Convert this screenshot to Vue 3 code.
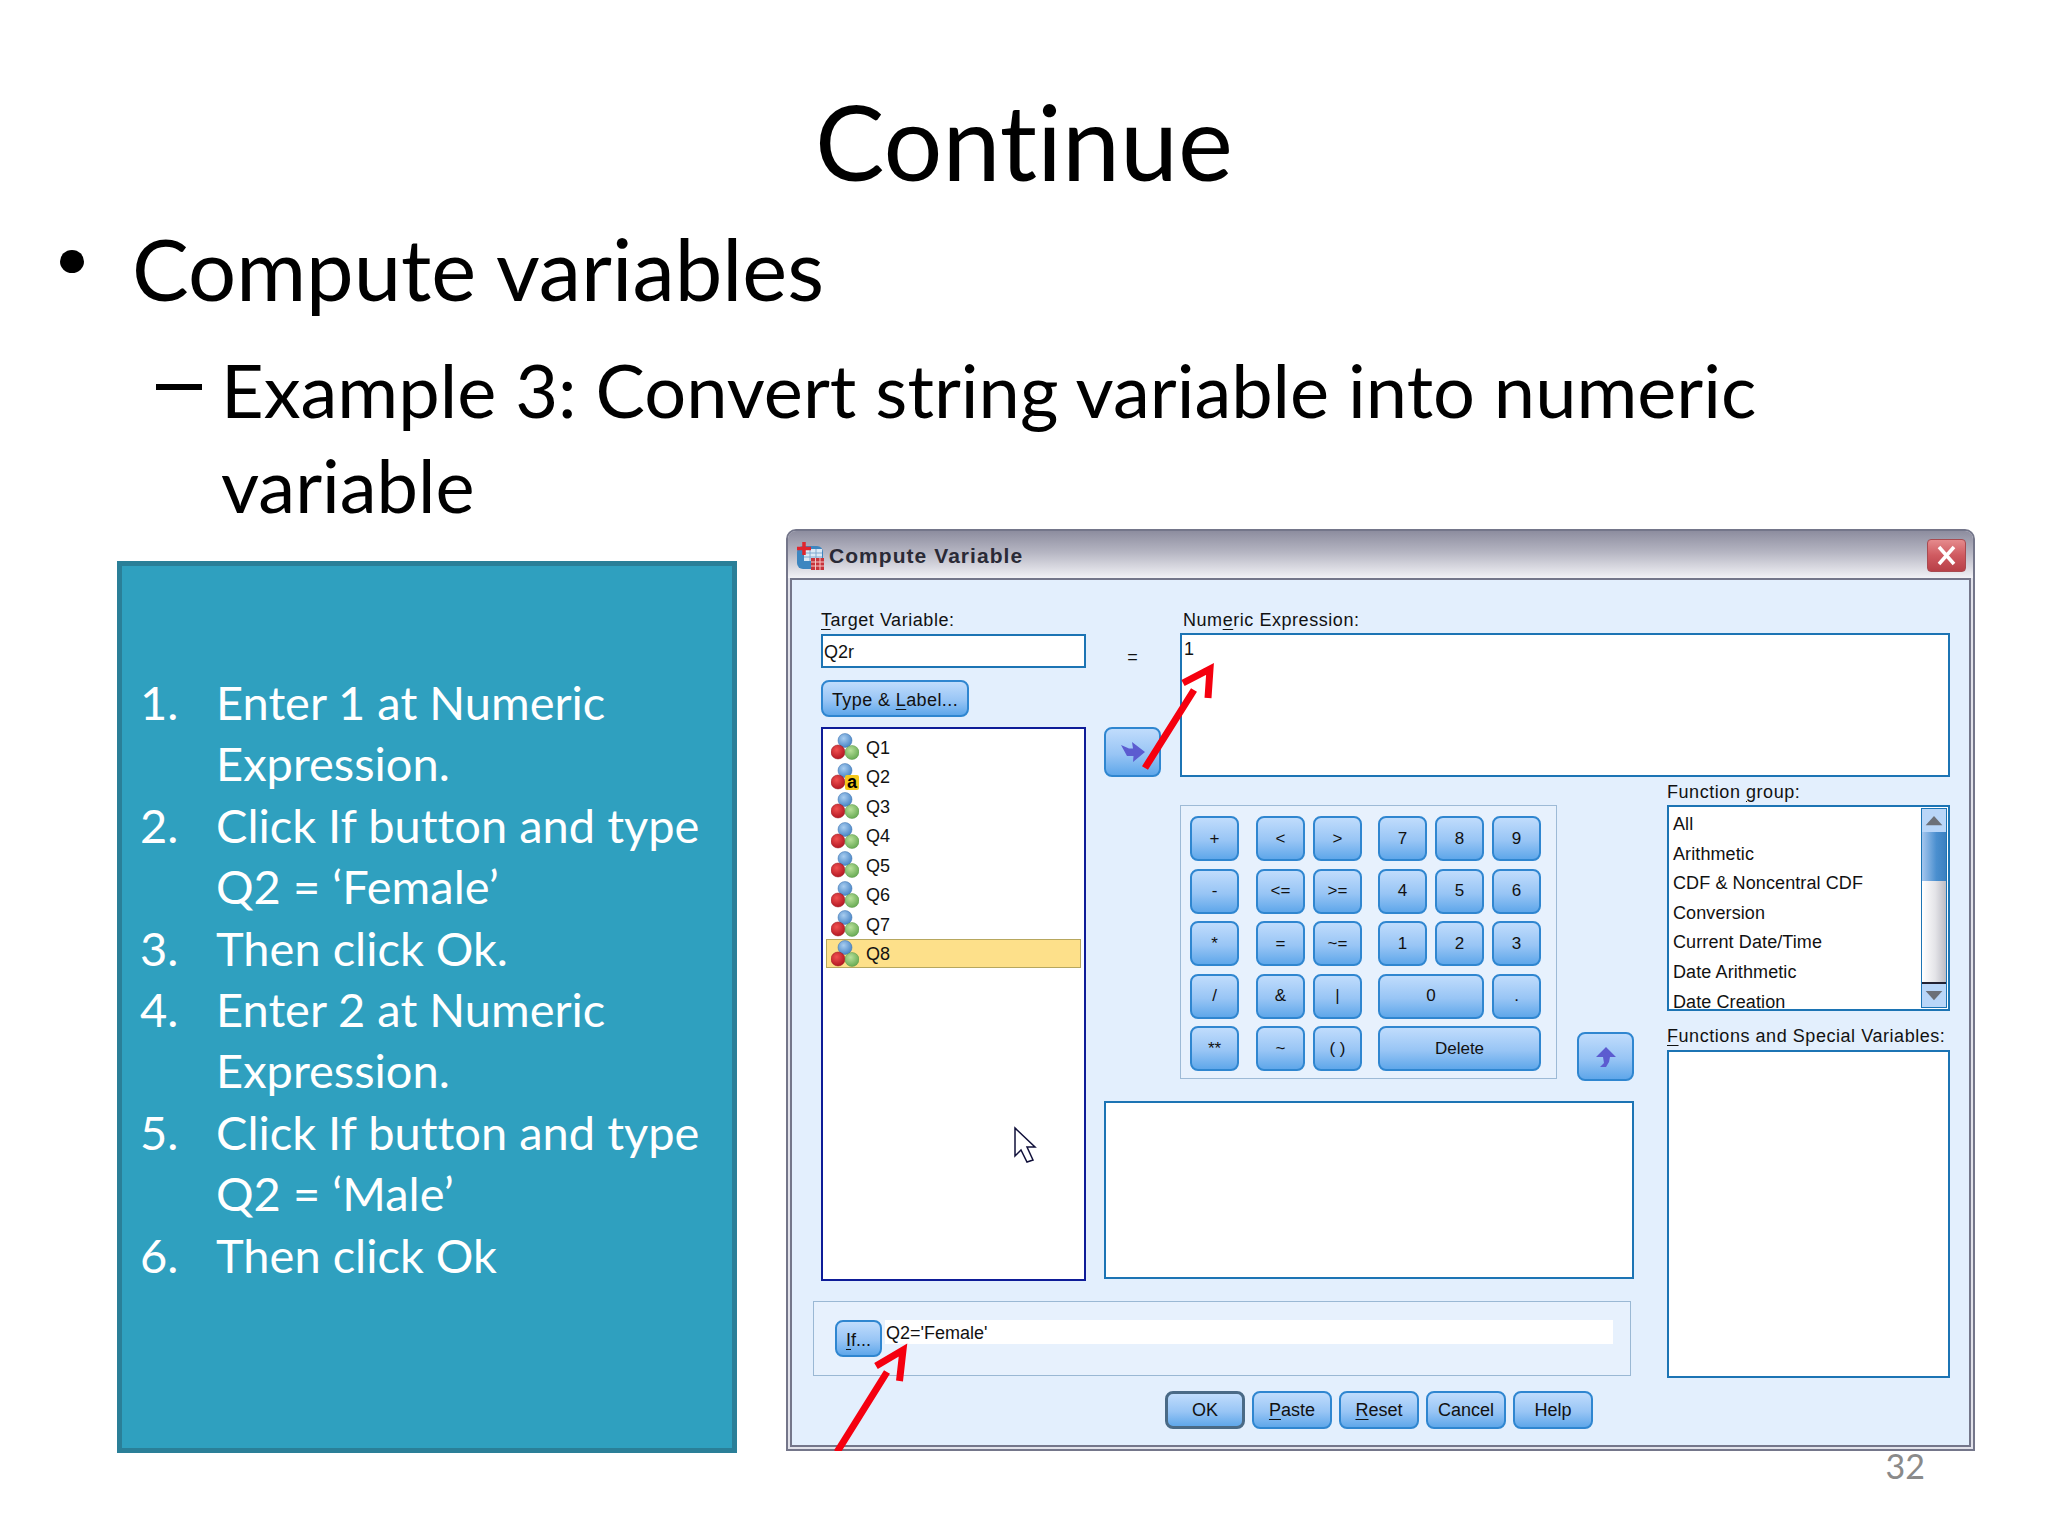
<script setup>
const steps = [
  'Enter 1 at Numeric Expression.',
  'Click If button and type Q2 = ‘Female’',
  'Then click Ok.',
  'Enter 2 at Numeric Expression.',
  'Click If button and type Q2 = ‘Male’',
  'Then click Ok',
]

const variables = ['Q1', 'Q2', 'Q3', 'Q4', 'Q5', 'Q6', 'Q7', 'Q8']

const functionGroups = [
  'All',
  'Arithmetic',
  'CDF & Noncentral CDF',
  'Conversion',
  'Current Date/Time',
  'Date Arithmetic',
  'Date Creation',
]

const comparators = ['<', '>', '<=', '>=', '=', '~=', '&', '|', '~', '( )']
const operators = ['+', '-', '*', '/', '**']
</script>

<template>
  <div class="slide">
    <h1 class="title">Continue</h1>
    <div class="bullet-row">
      <span class="dot"></span>
      <span>Compute variables</span>
    </div>
    <div class="sub-row">
      <span class="dash"></span>
      <span class="sub-text">Example 3: Convert string variable into numeric<br /><span class="nudge">variable</span></span>
    </div>

    <div class="content">
      <div class="steps">
        <ol class="step-list">
          <li v-for="(step, i) in steps" :key="i" class="step">
            <span>{{ i + 1 }}.</span>
            <span>{{ step }}</span>
          </li>
        </ol>
      </div>

      <div class="window">
        <div class="titlebar">
          <svg class="app-icon" viewBox="0 0 30 28">
            <rect x="2" y="4" width="26" height="23" rx="6" fill="#3d86c0" />
            <rect x="9" y="7" width="18" height="12" fill="#dbe9f6" />
            <path d="M9 11h18M9 15h18M15 7v12M21 7v12" stroke="#7fa8cf" stroke-width="1" />
            <path d="M9 0v13M2 6.500h14" stroke="#e0242c" stroke-width="3.500" />
            <rect x="16" y="16" width="13" height="12" fill="#c8343c" />
            <path d="M16 20h13M16 24h13M20.500 16v12M25 16v12" stroke="#f3c6c6" stroke-width="1" />
          </svg>
          <span class="window-title">Compute Variable</span>
          <span class="close-btn">
            <svg viewBox="0 0 37 31" width="37" height="31">
              <path d="M11 7l15 17M26 7L11 24" stroke="#fff" stroke-width="3.500" />
            </svg>
          </span>
        </div>

        <div class="dialog">
          <div class="target-col">
            <label class="lbl"><u>T</u>arget Variable:</label>
            <div class="input">Q2r</div>
            <button class="btn type-btn"><span>Type &amp; <u>L</u>abel...</span></button>
            <div class="var-list">
              <div v-for="name in variables" :key="name" class="var-row" :class="{ selected: name === 'Q8' }">
                <svg class="var-icon" viewBox="0 0 28 27">
                  <defs>
                    <radialGradient id="ball-b" cx="0.4" cy="0.35" r="0.7"><stop offset="0" stop-color="#a8cdf0" /><stop offset="1" stop-color="#4482c4" /></radialGradient>
                    <radialGradient id="ball-r" cx="0.4" cy="0.35" r="0.7"><stop offset="0" stop-color="#f05050" /><stop offset="1" stop-color="#b01420" /></radialGradient>
                    <radialGradient id="ball-g" cx="0.4" cy="0.35" r="0.7"><stop offset="0" stop-color="#b8e09a" /><stop offset="1" stop-color="#64a850" /></radialGradient>
                  </defs>
                  <circle cx="14" cy="7.500" r="7" fill="url(#ball-b)" stroke="#3a70ac" stroke-width="0.500" />
                  <circle cx="7" cy="19" r="7" fill="url(#ball-r)" stroke="#96141c" stroke-width="0.500" />
                  <circle cx="21" cy="19.500" r="7" fill="url(#ball-g)" stroke="#5a9848" stroke-width="0.500" />
                  <template v-if="name === 'Q2'">
                    <rect x="14" y="12" width="14" height="15" rx="2" fill="#f4c81c" />
                    <text x="21" y="25" class="string-mark">a</text>
                  </template>
                </svg>
                <span class="var-name">{{ name }}</span>
              </div>
            </div>
          </div>

          <div class="move-col">
            <span class="equals">=</span>
            <button class="btn move-btn">
              <svg viewBox="0 0 24 20" width="24" height="20">
                <path d="M0 3L8 6.500L12 6.500L11 0L24 10L12 20L12.500 14L6 14Z" fill="#5c5cd0" />
              </svg>
            </button>
          </div>

          <div class="numeric-col">
            <label class="lbl numeric-lbl">Num<u>e</u>ric Expression:</label>
            <div class="box numeric-box">1</div>
          </div>

          <div class="calc">
            <div class="calc-group ops">
              <button v-for="op in operators" :key="op" class="btn key">{{ op }}</button>
            </div>
            <div class="calc-group comps">
              <button v-for="c in comparators" :key="c" class="btn key">{{ c }}</button>
            </div>
            <div class="calc-group nums">
              <button v-for="n in ['7', '8', '9', '4', '5', '6', '1', '2', '3']" :key="n" class="btn key">{{ n }}</button>
              <button class="btn key wide2">0</button>
              <button class="btn key">.</button>
              <button class="btn key wide3">Delete</button>
            </div>
          </div>

          <button class="btn up-btn">
            <svg viewBox="0 0 20 20" width="20" height="20">
              <path d="M10 0L20 10L14 10L13 15L10 20L4 20L8 16L7 10L0 10Z" fill="#5c5cd0" />
            </svg>
          </button>

          <div class="box expr-box"></div>

          <div class="func-col">
            <label class="lbl">Function <u>g</u>roup:</label>
            <div class="func-list">
              <div class="func-items">
                <div v-for="f in functionGroups" :key="f" class="func-item">{{ f }}</div>
              </div>
              <div class="scrollbar">
                <div class="scroll-arrow">
                  <svg viewBox="0 0 26 24" width="22" height="20"><path d="M13 6L23 17H3Z" fill="#6c7078" /></svg>
                </div>
                <div class="scroll-thumb"></div>
                <div class="scroll-track"></div>
                <div class="scroll-arrow">
                  <svg viewBox="0 0 26 24" width="22" height="20"><path d="M3 6H23L13 17Z" fill="#6c7078" /></svg>
                </div>
              </div>
            </div>
            <label class="lbl second"><u>F</u>unctions and Special Variables:</label>
            <div class="box special-box"></div>
          </div>

          <div class="if-panel">
            <button class="btn if-btn"><span><u>I</u>f...</span></button>
            <div class="if-field">Q2='Female'</div>
          </div>

          <div class="footer">
            <button class="btn foot default">OK</button>
            <button class="btn foot"><span><u>P</u>aste</span></button>
            <button class="btn foot"><span><u>R</u>eset</span></button>
            <button class="btn foot">Cancel</button>
            <button class="btn foot">Help</button>
          </div>
        </div>

        <!-- annotations drawn over the dialog, in page coordinates -->
        <svg class="overlay" viewBox="786 529 1189 922">
          <path d="M1145 768L1194 690M1183 683L1210 669L1208 698" fill="none" stroke="#f5000f" stroke-width="7" />
          <path d="M837 1452L887 1372M876 1366L903 1350L899.500 1381" fill="none" stroke="#f5000f" stroke-width="7" />
          <path d="M1015 1128V1156L1021 1150L1027 1162L1033 1160L1027 1147L1035 1147Z" fill="#fff" stroke="#10103a" stroke-width="1.500" />
        </svg>
      </div>
    </div>

    <div class="page-num">32</div>
  </div>
</template>

<style scoped>
.slide {
  width: 2048px;
  height: 1536px;
  box-sizing: border-box;
  padding-top: 86px;
  background: #fff;
  color: #000;
  font-family: Lato, 'Open Sans', sans-serif;
  font-variant-ligatures: none;
  overflow: hidden;
}

.title {
  margin: 0;
  font-size: 104px;
  font-weight: 400;
  line-height: 110px;
  text-align: center;
}

.bullet-row {
  display: flex;
  align-items: center;
  margin-top: 22px;
  padding-left: 60px;
  font-size: 85px;
  line-height: 100px;
}

.dot {
  width: 24px;
  height: 23px;
  margin-right: 48px;
  margin-bottom: 14px;
  border-radius: 50%;
  background: #000;
}

.sub-row {
  display: flex;
  margin-top: 24px;
  padding-left: 156px;
  font-size: 74px;
  line-height: 95px;
}

.dash {
  width: 46px;
  height: 6px;
  margin: 42px 19px 0 0;
  background: #000;
}

.content {
  display: flex;
  align-items: flex-start;
  gap: 49px;
  margin-top: -3px;
  padding-left: 117px;
}

.steps {
  box-sizing: border-box;
  width: 620px;
  height: 892px;
  margin-top: 32px;
  padding: 106px 10px 0 18px;
  border: 5px solid #2a7f98;
  background: #2fa0bf;
  color: #fff;
}

.step-list {
  margin: 0;
  padding: 0;
  list-style: none;
  font-size: 47px;
  line-height: 61.400px;
}

.step {
  display: grid;
  grid-template-columns: 76px 1fr;
}

.window {
  position: relative;
  box-sizing: border-box;
  width: 1189px;
  height: 922px;
  padding: 0 2px 2px;
  border: 2px solid #74768a;
  border-radius: 10px 10px 0 0;
  background: #e2e2ea;
  font-family: 'Liberation Sans', Arial, sans-serif;
  font-size: 18px;
  color: #111;
}

.titlebar {
  display: flex;
  align-items: center;
  box-sizing: border-box;
  height: 46.500px;
  margin: 0 -2px;
  padding: 3px 7px 0;
  border-radius: 8px 8px 0 0;
  background: linear-gradient(#8d8d9f, #b5b5c2 45%, #f2f2f6);
}

.app-icon {
  width: 30px;
  height: 28px;
  margin-right: 4px;
}

.window-title {
  font-size: 21px;
  font-weight: 700;
  letter-spacing: 1.050px;
  color: #2a2a36;
}

.close-btn {
  display: flex;
  margin-left: auto;
  border-radius: 4px;
  border: 1px solid #a84a50;
  background: linear-gradient(#e58a8c, #cf5a60 50%, #b84048);
}

.dialog {
  display: grid;
  grid-template-columns: 8px 265px 18px 57px 19px 377px 20px 57px 33px 283px;
  grid-template-rows: 167px 304px 200px 97px 1fr;
  height: 869.500px;
  box-sizing: border-box;
  padding: 30.500px 0 0 21px;
  border: 2px solid #74768a;
  background: #e3effd;
}

.lbl {
  display: block;
  height: 23px;
  line-height: 21px;
  letter-spacing: 0.550px;
  white-space: nowrap;
}

.numeric-lbl {
  padding-left: 3px;
}

u {
  text-underline-offset: 3px;
}

.btn {
  display: flex;
  align-items: center;
  justify-content: center;
  box-sizing: border-box;
  padding: 0;
  border: 2px solid #2f86d0;
  border-radius: 8px;
  background: linear-gradient(#c0dcfc, #98c5f5 55%, #5fa7ea);
  color: #111;
  font-family: inherit;
  font-size: 18px;
}

.box {
  box-sizing: border-box;
  border: 2px solid #1c74b4;
  background: #fff;
}

.target-col {
  display: flex;
  flex-direction: column;
  grid-column: 2;
  grid-row: 1 / 4;
}

.input {
  box-sizing: border-box;
  height: 34px;
  margin-top: 1px;
  padding-left: 1px;
  border: 2px solid #1c74b4;
  background: #fff;
  line-height: 32px;
}

.type-btn {
  width: 148px;
  height: 37px;
  margin-top: 12px;
  padding-top: 3px;
  letter-spacing: 0.400px;
}

.var-list {
  flex: 1;
  box-sizing: border-box;
  margin-top: 10px;
  padding: 3px;
  border: 2px solid #0e1c98;
  background: #fff;
}

.var-row {
  display: flex;
  align-items: center;
  gap: 7px;
  box-sizing: border-box;
  height: 29.500px;
  padding-left: 5px;
}

.var-name {
  padding-top: 3px;
}

.var-row.selected {
  border: 1px solid #b7a75e;
  padding-left: 4px;
  background: #fde08a;
}

.var-icon {
  width: 28px;
  height: 27px;
}

.string-mark {
  font-family: 'Liberation Sans', Arial, sans-serif;
  font-size: 18px;
  font-weight: 700;
  text-anchor: middle;
  fill: #000;
}

.move-col {
  display: flex;
  flex-direction: column;
  grid-column: 4;
  grid-row: 1;
  align-items: center;
}

.equals {
  padding-top: 36px;
  line-height: 22px;
}

.move-btn {
  width: 57px;
  height: 50px;
  margin-top: auto;
}

.numeric-col {
  display: flex;
  flex-direction: column;
  grid-column: 6 / 11;
  grid-row: 1;
}

.numeric-box {
  flex: 1;
  padding-left: 2px;
  line-height: 28px;
}

.calc {
  display: flex;
  gap: 17px;
  grid-column: 6;
  grid-row: 2;
  align-self: start;
  box-sizing: border-box;
  height: 274px;
  margin-top: 28px;
  padding: 10px 9px;
  border: 1px solid #9dbad6;
  background: #e7f1fd;
}

.calc-group {
  display: grid;
  grid-auto-rows: 45px;
  column-gap: 8px;
  row-gap: 7.500px;
}

.ops {
  grid-template-columns: 49px;
}

.comps {
  grid-template-columns: 49px 49px;
}

.nums {
  grid-template-columns: 49px 49px 49px;
  margin-left: -1px;
}

.key {
  font-size: 17px;
}

.wide2 {
  grid-column: span 2;
}

.wide3 {
  grid-column: span 3;
}

.up-btn {
  grid-column: 8;
  grid-row: 2;
  align-self: end;
  height: 49px;
}

.expr-box {
  grid-column: 4 / 9;
  grid-row: 3;
  margin-top: 20px;
  margin-bottom: 2px;
}

.func-col {
  display: flex;
  flex-direction: column;
  grid-column: 10;
  grid-row: 2 / 5;
  padding-top: 5px;
}

.func-list {
  display: flex;
  box-sizing: border-box;
  height: 206px;
  border: 2px solid #1c74b4;
  background: #fff;
}

.func-items {
  flex: 1;
  padding: 3px 0 0 4px;
  letter-spacing: 0.100px;
}

.func-item {
  height: 29.600px;
  line-height: 29.600px;
  white-space: nowrap;
}

.func-item:last-child {
  height: 20px;
}

.scrollbar {
  display: flex;
  flex-direction: column;
  width: 26px;
  margin: 1px 1px 1px 0;
  border: 1px solid #1c74b4;
  box-sizing: border-box;
}

.scroll-arrow {
  display: flex;
  align-items: center;
  justify-content: center;
  height: 23px;
  background: #b9d6f8;
}

.scroll-thumb {
  height: 49px;
  background: linear-gradient(90deg, #a4c6ee, #4a8fcf 60%, #3b80c0);
}

.scroll-track {
  flex: 1;
  background: linear-gradient(90deg, #fff, #e4e4e8 55%, #bcbcc4);
  border-bottom: 2px solid #223;
}

.lbl.second {
  height: 24px;
  margin-top: 14px;
  margin-bottom: 1px;
  line-height: 23px;
}

.special-box {
  flex: 1;
}

.if-panel {
  display: flex;
  grid-column: 1 / 9;
  grid-row: 4;
  align-self: start;
  box-sizing: border-box;
  height: 75px;
  margin: 20px 3px 0 0;
  padding: 18px 17px 0 21px;
  border: 1px solid #9ab8d4;
  background: #e7f1fd;
}

.if-btn {
  flex: none;
  width: 47px;
  height: 37px;
  padding-top: 3px;
}

.if-field {
  flex: 1;
  height: 24px;
  margin-left: 3px;
  padding-left: 1px;
  background: #fff;
  line-height: 26px;
}

.footer {
  display: flex;
  gap: 7px;
  grid-column: 1 / -1;
  grid-row: 5;
  align-self: start;
  padding: 13px 0 0 352px;
}

.foot {
  width: 80px;
  height: 38px;
  padding-top: 1px;
}

.foot.default {
  border-color: #4a6a86;
  border-width: 3px;
}

.overlay {
  position: absolute;
  top: -2px;
  left: -2px;
  width: 1189px;
  height: 922px;
  pointer-events: none;
}

.page-num {
  padding-right: 123px;
  color: #8a8a8a;
  font-size: 34px;
  line-height: 26px;
  text-align: right;
}
</style>
